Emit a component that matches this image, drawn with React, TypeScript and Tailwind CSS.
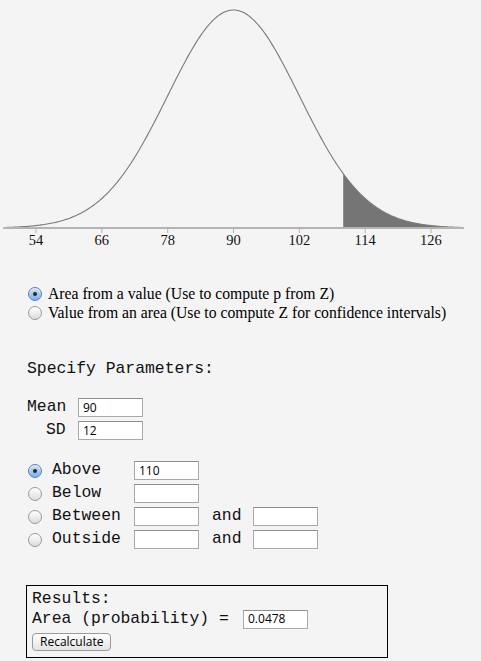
import React from "react";

const MEAN = 90;
const SD = 12;
const CUT = 110;

// chart geometry
const toX = (v: number) => 233.5 + (v - MEAN) * 5.486;
const toY = (v: number) => 228 - 218 * Math.exp(-0.5 * ((v - MEAN) / SD) ** 2);

function buildCurve(from: number, to: number) {
  const pts: string[] = [];
  for (let v = from; v <= to + 0.001; v += 0.25) {
    pts.push(`${toX(v).toFixed(2)},${toY(v).toFixed(2)}`);
  }
  return pts;
}

function Chart() {
  const lo = MEAN - 3.5 * SD;
  const hi = MEAN + 3.5 * SD;
  const curve = "M" + buildCurve(lo, hi).join(" L");
  const tail = buildCurve(CUT, hi);
  const shade = `M${toX(CUT)},228 L${tail.join(" L")} L${toX(hi)},228 Z`;
  const ticks = [54, 66, 78, 90, 102, 114, 126];

  return (
    <svg width="481" height="252" className="block">
      <path d={shade} fill="#757575" />
      <path d={curve} fill="none" stroke="#7a7a7a" strokeWidth="1.1" />
      <line x1={toX(lo)} y1="228" x2={toX(hi)} y2="228" stroke="#b4b4b4" strokeWidth="2" />
      {ticks.map((t) => (
        <g key={t}>
          <line x1={toX(t)} y1="229" x2={toX(t)} y2="233" stroke="#b4b4b4" strokeWidth="1" />
          <text
            x={toX(t)}
            y="245"
            textAnchor="middle"
            fontSize="14.5"
            fill="#111"
            style={{ fontFamily: '"Liberation Serif", serif' }}
          >
            {t}
          </text>
        </g>
      ))}
    </svg>
  );
}

function Radio({ checked = false }: { checked?: boolean }) {
  return checked ? (
    <span className="w-[14px] h-[14px] rounded-full border border-[#5a7fb0] bg-gradient-to-b from-[#cfe3f8] to-[#7fb0e6] flex items-center justify-center shrink-0 shadow-[inset_0_1px_1px_rgba(255,255,255,0.8)]">
      <span className="w-[4px] h-[4px] rounded-full bg-[#1c2a3c]" />
    </span>
  ) : (
    <span className="w-[14px] h-[14px] rounded-full border border-[#9a9a9a] bg-gradient-to-b from-[#ffffff] to-[#dcdcdc] shrink-0" />
  );
}

function Field({ value = "" }: { value?: string }) {
  return (
    <div className="w-[65px] h-[19px] bg-white border border-[#a9a9a9] border-t-[#8e8e8e] flex items-center pl-[4px] text-[12px] text-black font-['Open_Sans',sans-serif] shrink-0">
      {value}
    </div>
  );
}

const mono = "font-['Liberation_Mono',monospace] text-[16.4px] text-[#111]";

export default function App() {
  const options = [
    { label: "Above", value: "110", checked: true, second: false },
    { label: "Below", value: "", checked: false, second: false },
    { label: "Between", value: "", checked: false, second: true },
    { label: "Outside", value: "", checked: false, second: true },
  ];

  return (
    <main className="w-[481px] h-[661px] bg-[#f4f4f4] overflow-hidden">
      <Chart />

      {/* mode selection */}
      <div className="mt-[32px] pl-[28px] font-['Liberation_Serif',serif] text-[15.7px] text-black leading-[19px]">
        <div className="flex items-center gap-[6px]">
          <Radio checked />
          <span>Area from a value (Use to compute p from Z)</span>
        </div>
        <div className="flex items-center gap-[6px]">
          <Radio />
          <span>Value from an area (Use to compute Z for confidence intervals)</span>
        </div>
      </div>

      <div className={`mt-[37px] pl-[27px] ${mono} leading-[20px]`}>Specify Parameters:</div>

      {/* parameters */}
      <div className={`mt-[19px] pl-[27px] flex flex-col gap-[4px] ${mono}`}>
        <div className="flex items-center h-[19px]">
          <span className="w-[51px]">Mean</span>
          <Field value="90" />
        </div>
        <div className="flex items-center h-[19px]">
          <span className="w-[51px] pl-[19px]">SD</span>
          <Field value="12" />
        </div>
      </div>

      {/* tail selection */}
      <div className={`mt-[21px] pl-[28px] flex flex-col gap-[4px] ${mono}`}>
        {options.map((o) => (
          <div key={o.label} className="flex items-center h-[19px]">
            <Radio checked={o.checked} />
            <span className="ml-[10px] w-[82px]">{o.label}</span>
            <Field value={o.value} />
            {o.second && (
              <>
                <span className="ml-[13px] w-[41px]">and</span>
                <Field />
              </>
            )}
          </div>
        ))}
      </div>

      {/* results */}
      <div className={`mt-[36px] ml-[26px] w-[362px] h-[73px] border border-black px-[5px] pt-[2px] ${mono}`}>
        <div className="leading-[21px]">Results:</div>
        <div className="flex items-center h-[20px]">
          <span className="w-[211px] whitespace-pre">Area (probability) =</span>
          <Field value="0.0478" />
        </div>
        <button className="mt-[4px] h-[18px] px-[7px] rounded-[4px] border border-[#9b9b9b] bg-gradient-to-b from-white to-[#e4e4e4] text-[12px] leading-none text-black font-['Open_Sans',sans-serif] flex items-center">
          Recalculate
        </button>
      </div>
    </main>
  );
}
